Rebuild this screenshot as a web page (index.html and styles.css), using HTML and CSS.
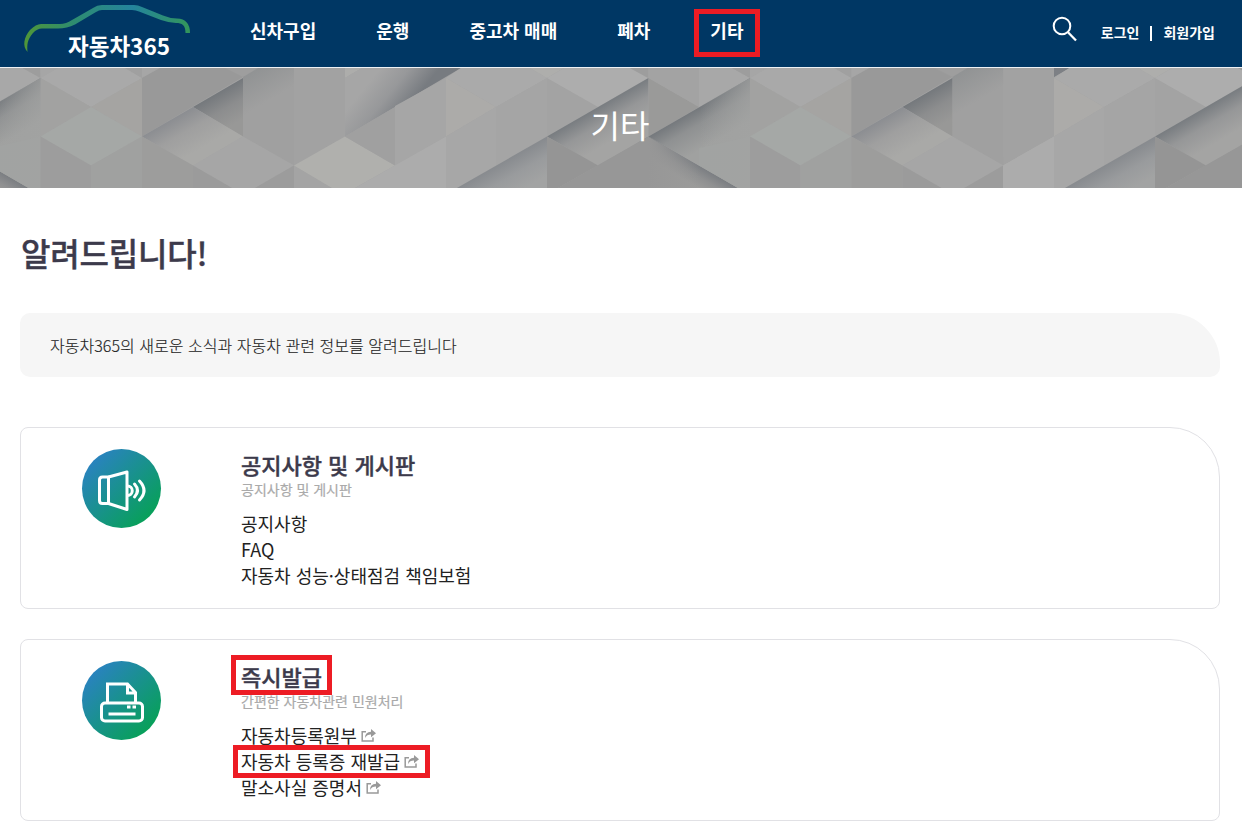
FILE: index.html
```html
<!DOCTYPE html>
<html lang="ko">
<head>
    <meta charset="UTF-8">
    <meta name="viewport" content="width=device-width, initial-scale=1.0">
    <title>자동차365</title>
    <link rel="stylesheet" href="styles.css">
</head>
<body>
    <header class="header">
        <a class="logo">
            <svg width="180" height="67" viewBox="0 0 180 67">
                <defs>
                    <linearGradient id="car" gradientUnits="userSpaceOnUse" x1="4" y1="0" x2="170" y2="0">
                        <stop offset="0" stop-color="#4f9638"/>
                        <stop offset="0.3" stop-color="#2e8c70"/>
                        <stop offset="0.65" stop-color="#24849d"/>
                        <stop offset="1" stop-color="#33965a"/>
                    </linearGradient>
                </defs>
                <path d="M7.500 52C2 46 4 37 10 30Q16 24 21 24H40Q46 24 52 20L73 8Q77 5 82 5H114Q118 5 122 7L143 15.500Q150 18.500 157 18.500Q170 19 170 33H165.500C165.500 25 162 23 156 23Q148 22.500 141 20L119 11.500Q116 10 112 10H82Q79 10 76 12L55 24.500Q47 28.500 38 28.500H22Q17 28.500 13 33C7 40 7 45 7.500 52Z" fill="url(#car)"/>
                <text x="48" y="55" class="logo-text">자동차365</text>
            </svg>
        </a>
        <nav class="nav">
            <a>신차구입</a>
            <a>운행</a>
            <a>중고차 매매</a>
            <a>폐차</a>
            <a class="mark mark-nav">기타</a>
        </nav>
        <div class="util">
            <svg class="search" width="26" height="26" viewBox="0 0 26 26" fill="none" stroke="#fff">
                <circle cx="10" cy="10" r="8.300" stroke-width="2"/>
                <path d="M16 16.200L24 24.500" stroke-width="2.300"/>
            </svg>
            <a>로그인</a>
            <i class="bar"></i>
            <a>회원가입</a>
        </div>
    </header>

    <section class="hero">
        <svg class="hero-bg" width="1242" height="120" viewBox="0 68 1242 120">
            <defs>
                <linearGradient id="s1" gradientUnits="userSpaceOnUse" x1="218" y1="92" x2="236" y2="123"><stop offset="0" stop-color="#74787c"/><stop offset="0.500" stop-color="#8c8d8e"/><stop offset="1" stop-color="#989897"/></linearGradient>
                <linearGradient id="s2" gradientUnits="userSpaceOnUse" x1="168" y1="121" x2="188" y2="156"><stop offset="0" stop-color="#8b8d91"/><stop offset="0.450" stop-color="#9f9f9f"/><stop offset="1" stop-color="#a9a9a7"/></linearGradient>
                <linearGradient id="s3" gradientUnits="userSpaceOnUse" x1="382" y1="66" x2="418" y2="95"><stop offset="0" stop-color="#a6a6a6"/><stop offset="0.500" stop-color="#97989a"/><stop offset="1" stop-color="#777b80"/></linearGradient>
                <linearGradient id="s4" gradientUnits="userSpaceOnUse" x1="590" y1="112" x2="608" y2="143"><stop offset="0" stop-color="#797d81"/><stop offset="0.450" stop-color="#969798"/><stop offset="1" stop-color="#a4a4a3"/></linearGradient>
                <linearGradient id="s5" gradientUnits="userSpaceOnUse" x1="510" y1="157" x2="527" y2="187"><stop offset="0" stop-color="#878a8e"/><stop offset="0.500" stop-color="#999b9d"/><stop offset="1" stop-color="#a2a3a3"/></linearGradient>
                <linearGradient id="s6" gradientUnits="userSpaceOnUse" x1="690" y1="112" x2="709" y2="145"><stop offset="0" stop-color="#74787c"/><stop offset="0.400" stop-color="#8f9192"/><stop offset="1" stop-color="#a0a1a0"/></linearGradient>
                <linearGradient id="s7" gradientUnits="userSpaceOnUse" x1="700" y1="166" x2="690" y2="183"><stop offset="0" stop-color="#7b7e82"/><stop offset="0.500" stop-color="#8f9091"/><stop offset="1" stop-color="#9b9b9a"/></linearGradient>
                <linearGradient id="s8" gradientUnits="userSpaceOnUse" x1="243" y1="77" x2="260" y2="106"><stop offset="0" stop-color="#919394"/><stop offset="1" stop-color="#a0a0a0"/></linearGradient>
                <linearGradient id="s9" gradientUnits="userSpaceOnUse" x1="700" y1="0" x2="750" y2="0"><stop offset="0" stop-color="#a2a3a2" stop-opacity="0"/><stop offset="1" stop-color="#a2a3a2" stop-opacity="0.700"/></linearGradient>
                <linearGradient id="s10" gradientUnits="userSpaceOnUse" x1="648" y1="0" x2="700" y2="0"><stop offset="0" stop-color="#979797"/><stop offset="1" stop-color="#979797" stop-opacity="0"/></linearGradient>
                <clipPath id="left"><rect x="0" y="68" width="1054" height="120"/></clipPath>
                <clipPath id="right"><rect x="1054" y="68" width="188" height="120"/></clipPath>
                <g id="tile">
                    <!-- cube -->
                    <path fill="#a6a6a6" d="M40 68H58L40.500 78z"/>
                    <path fill="#a9a9a9" d="M40.500 78L58 68H125L142 78L91 107z"/>
                    <path fill="#a2a2a1" d="M40.500 78L91 107L40.500 136.500z"/>
                    <path fill="#a5a4a2" d="M91 107L142 78V136.500z"/>
                    <path fill="#a5a8a6" d="M40.500 136.500L91 107L142 136.500L91 165.500z"/>
                    <path fill="#9d9d9d" d="M40.500 136.500L91 165.500V188H40.500z"/>
                    <path fill="#a0a1a0" d="M91 165.500L142 136.500V188H91z"/>
                    <path fill="#a0a0a0" d="M125 68H142V78z"/>
                    <path fill="#a6a6a6" d="M142 68H160L142 78z"/>
                    <path fill="#999999" d="M142 78L160 68H258L142 136.500z"/>
                    <path fill="#9e9e9e" d="M225 68H258L243 77z"/>
                    <path fill="url(#s8)" d="M243 77L258 68H294V165.500L243 136.500z"/>
                    <path fill="#a2a2a2" d="M294 68H345V136.500L294 165.500z"/>
                    <path fill="url(#s1)" d="M193 107L243 78V136.500z"/>
                    <path fill="url(#s2)" d="M142 136.500L193 107L243 136.500L193 165.500z"/>
                    <path fill="#a6a6a6" d="M193 165.500L243 136.500L294 165.500L255 188H232z"/>
                    <path fill="#9d9d9c" d="M142 136.500L193 165.500V188H142z"/>
                    <path fill="#9b9b9b" d="M193 165.500L232 188H193z"/>
                    <path fill="#9c9c9c" d="M294 165.500V188H255z"/>
                    <path fill="#a4a4a4" d="M294 165.500L332 188H294z"/>
                    <path fill="#b0b0ad" d="M294 165.500L345 136.500L395 165.500L355 188H332z"/>
                    <path fill="#adadab" d="M345 68H362L345 78z"/>
                    <path fill="#a4a4a4" d="M345 78L362 68H461L395 107L345 136.500z"/>
                    <path fill="url(#s3)" d="M362 68H461L395 107L345 136.500V78z"/>
                    <path fill="#a0a0a0" d="M345 136.500L395 107V165.500z"/>
                    <path fill="#a6a6a6" d="M395 106L446 78V136.500L395 165.500z"/>
                    <path fill="#acacac" d="M355 188L446 136.500V188z"/>
                    <path fill="#aaaaaa" d="M446 78L461 68H530L547 78L496 107z"/>
                    <path fill="#acaba9" d="M446 78L496 107L446 136.500z"/>
                    <path fill="#a7a7a7" d="M446 136.500L496 107V165.500L457 188H446z"/>
                    <path fill="#a5a5a5" d="M496 107L547 78V136.500L496 165.500z"/>
                    <path fill="#aeaeac" d="M530 68H564L547 78z"/>
                    <path fill="#a3a3a3" d="M547 78L598 107L547 136.500z"/>
                    <path fill="#adadad" d="M547 78L564 68H630L648 78L598 107z"/>
                    <path fill="url(#s4)" d="M547 136.500L648.500 78V136.500L598 165.500z"/>
                    <path fill="url(#s5)" d="M457 188L547 136.500V188z"/>
                    <path fill="#959595" d="M547 136.500L598 165.500L558 188H547z"/>
                    <path fill="url(#s7)" d="M558 188L648.500 136.500L738 188z"/>
                    <path fill="#979797" d="M558 188L648.500 136.500V188z"/>
                    <path fill="url(#s10)" d="M648 136.500L700 166V188H648z"/>
                    <path fill="#9d9d9d" d="M630 68H648.500V78z"/>
                    <path fill="#9a9a99" d="M648.500 78L699 107L648.500 136.500z"/>
                    <path fill="#a3a3a3" d="M648.500 68H699V107L648.500 78z"/>
                    <path fill="#a8a8a8" d="M699 68H732L750 78L699 107z"/>
                    <path fill="#9d9d9d" d="M732 68H750V78z"/>
                    <path fill="url(#s6)" d="M648.500 136.500L750 78V188H738z"/>
                    <path fill="#a2a5a3" d="M699 165.500V148L750 136.500V188H738z" opacity="0.500"/>
                    <path fill="url(#s9)" d="M699 107L750 78V188H738L699 165z"/>
                </g>
            </defs>
            <rect y="68" width="1242" height="120" fill="#a3a3a3"/>
            <g clip-path="url(#left)">
                <use href="#tile" x="-709.400"/>
                <use href="#tile" x="709.400"/>
                <use href="#tile"/>
                <path fill="#acacac" d="M1003 165.500L1054 136.500V188H1003z"/>
            </g>
            <g clip-path="url(#right)">
                <use href="#tile" x="608"/>
                <path fill="#7d8085" d="M1054 68H1069L1054 77z"/>
            </g>
        </svg>
        <h1>기타</h1>
    </section>

    <main class="content">
        <h2>알려드립니다!</h2>
        <p class="intro">자동차365의 새로운 소식과 자동차 관련 정보를 알려드립니다</p>

        <section class="card">
            <div class="circle">
                <svg width="79" height="79" viewBox="0.5 0.5 79 79" fill="none" stroke="#fff" stroke-width="3" stroke-linejoin="round">
                    <path d="M27 28.500H21Q18 28.500 18 31.500V52Q18 55 21 55H27z"/>
                    <path d="M27 28.500L45.500 23.500V61L27 55"/>
                    <path d="M46 37.500A4.300 4.300 0 0 1 46 47" />
                    <path d="M53 35.500Q59 42 53 48.500M58 32.500Q67 42 58 51.500" stroke-linecap="round"/>
                </svg>
            </div>
            <div class="text">
                <h3>공지사항 및 게시판</h3>
                <p>공지사항 및 게시판</p>
                <ul>
                    <li>공지사항</li>
                    <li>FAQ</li>
                    <li>자동차 성능·상태점검 책임보험</li>
                </ul>
            </div>
        </section>

        <section class="card">
            <div class="circle">
                <svg width="79" height="79" viewBox="0.5 0.5 79 79" fill="none" stroke="#fff" stroke-width="3">
                    <rect x="20" y="42.500" width="41" height="18" rx="3.500"/>
                    <path d="M26 43V23.500H46L54 32V43M46 24V32.500H54M27 53.500H54"/>
                    <path d="M45.500 46.500H49M51 46.500H54.500"/>
                </svg>
            </div>
            <div class="text">
                <h3><span class="mark mark-title">즉시발급</span></h3>
                <p>간편한 자동차관련 민원처리</p>
                <ul>
                    <li>자동차등록원부<svg class="link" viewBox="0 0 15 13"><path class="box" d="M5 2.700H1.200V12H12V8.500"/><path class="arrow" d="M4 9Q4 3 10 2.800V0L15 4.300L10 8.200V5.600Q6 5.500 4 9z"/></svg></li>
                    <li><span class="mark mark-link">자동차 등록증 재발급<svg class="link" viewBox="0 0 15 13"><path class="box" d="M5 2.700H1.200V12H12V8.500"/><path class="arrow" d="M4 9Q4 3 10 2.800V0L15 4.300L10 8.200V5.600Q6 5.500 4 9z"/></svg></span></li>
                    <li>말소사실 증명서<svg class="link" viewBox="0 0 15 13"><path class="box" d="M5 2.700H1.200V12H12V8.500"/><path class="arrow" d="M4 9Q4 3 10 2.800V0L15 4.300L10 8.200V5.600Q6 5.500 4 9z"/></svg></li>
                </ul>
            </div>
        </section>
    </main>
</body>
</html>
```
FILE: styles.css
```css
*,
*::after {
    box-sizing: border-box;
    margin: 0;
    padding: 0;
}
body {
    font-family: "Noto Sans CJK KR", sans-serif;
    color: #222;
    background-color: #fff;
    overflow: hidden;
}
.header {
    display: flex;
    height: 68px;
    padding: 0 27px 0 20px;
    background-color: #003764;
    border-bottom: 1px solid #eef1f4;
    color: #fff;
}
.logo {
    width: 230px;
}
.logo svg {
    display: block;
}
.logo-text {
    font-size: 22.5px;
    font-weight: 700;
    fill: #fff;
}
.nav {
    display: flex;
    gap: 60px;
    font-size: 18px;
    font-weight: 700;
    line-height: 26px;
    padding-top: 17px;
}
.util {
    display: flex;
    margin-left: auto;
    padding-top: 22px;
    font-size: 14px;
    font-weight: 700;
    line-height: 20px;
}
.search {
    margin: -6px 23px 0 0;
}
.bar {
    width: 2px;
    height: 15px;
    margin: 4px 11px 0 11px;
    background-color: #fff;
}
/* red highlight boxes */
.mark {
    position: relative;
}
.mark::after {
    content: "";
    position: absolute;
    border: 5px solid #ed1c24;
}
.mark-nav::after {
    left: -16px;
    top: -8px;
    width: 66px;
    height: 48px;
}
.mark-title::after {
    left: -10px;
    top: -5px;
    width: 101px;
    height: 40px;
}
.mark-link::after {
    left: -8px;
    top: -3px;
    width: 197px;
    height: 33px;
}
.hero {
    position: relative;
    height: 120px;
    text-align: center;
    color: #fff;
}
.hero-bg {
    position: absolute;
    left: 0;
    top: 0;
}
.hero h1 {
    position: relative;
    font-size: 32px;
    font-weight: 400;
    line-height: 48px;
    padding-top: 32px;
    padding-right: 2px;
}
.content {
    padding: 40px 22px 0 20px;
}
.content h2 {
    padding-left: 1px;
    font-size: 32px;
    font-weight: 500;
    line-height: 48px;
    letter-spacing: -0.2px;
    color: #3c3a4b;
    -webkit-text-stroke: 0.4px #3c3a4b;
}
.intro {
    height: 64px;
    margin-top: 37px;
    margin-bottom: 50px;
    padding-left: 30px;
    font-size: 16px;
    font-weight: 300;
    line-height: 64px;
    letter-spacing: 0.03px;
    background-color: #f6f6f6;
    border-radius: 10px 50px 10px 10px;
    -webkit-text-stroke: 0.15px #222;
}
.card {
    display: flex;
    height: 182px;
    margin-bottom: 30px;
    padding: 20px 60px;
    border: 1px solid #e1e1e5;
    border-radius: 8px 50px 8px 8px;
}
.circle {
    width: 79px;
    height: 79px;
    margin: 0.5px 80.5px 0 0.5px;
    border-radius: 50%;
    background: linear-gradient(135deg, #2b81c4 10%, #08a05a 85%);
}
.circle svg {
    display: block;
}
.text h3 {
    height: 32px;
    font-size: 22px;
    font-weight: 500;
    line-height: 32px;
    color: #3c3a4b;
    -webkit-text-stroke: 0.4px #3c3a4b;
}
.text h3 .mark {
    display: inline-block;
}
.text p {
    height: 20px;
    font-size: 14px;
    line-height: 19px;
    color: #aaa;
    -webkit-text-stroke: 0.2px #aaa;
}
.text ul {
    list-style: none;
    margin-top: 10px;
}
.text li {
    height: 26px;
    font-size: 18px;
    line-height: 26px;
}
.text li .mark {
    display: inline-block;
}
.link {
    width: 15px;
    height: 13px;
    margin-left: 4px;
    vertical-align: 1px;
}
.link .box {
    fill: none;
    stroke: #999;
    stroke-width: 1.5;
}
.link .arrow {
    fill: #999;
}
```
